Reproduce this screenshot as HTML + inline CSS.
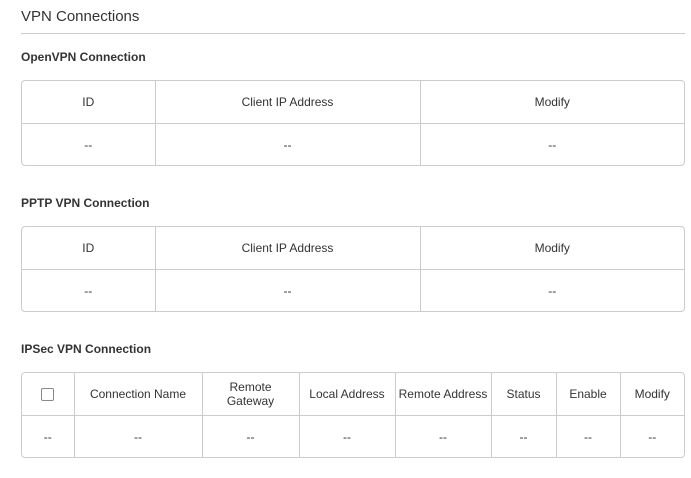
<!DOCTYPE html>
<html><head><style>
body{margin:0;background:#fff;font-family:"Liberation Sans",Arial,sans-serif;color:#333;width:691px;height:478px;overflow:hidden;position:relative}
.h{position:absolute;left:21px;top:8px;font-size:15px;color:#333}
.line{position:absolute;left:21px;top:33px;width:664px;height:1px;background:#ccc}
.st{position:absolute;left:21px;font-size:12px;font-weight:bold;color:#333}
.w{position:absolute;left:21px;width:662px;height:84px;border:1px solid #ccc;border-radius:4px;overflow:hidden}
table{border-collapse:collapse;width:100%;height:100%;table-layout:fixed}
td{border-right:1px solid #ccc;text-align:center;font-size:12px;color:#333;padding:0;line-height:14px}
td:last-child{border-right:none}
tr:first-child td{border-bottom:1px solid #ccc;height:42px}
.cb{display:inline-block;width:11px;height:11px;border:1px solid #888;border-radius:2px;vertical-align:middle}
</style></head><body>
<div class="h">VPN Connections</div>
<div class="line"></div>
<div class="st" style="top:50px">OpenVPN Connection</div>
<div class="w" style="top:80px"><table><colgroup><col style="width:133px"><col style="width:265px"><col></colgroup>
<tr><td>ID</td><td>Client IP Address</td><td>Modify</td></tr>
<tr><td>--</td><td>--</td><td>--</td></tr></table></div>
<div class="st" style="top:196px">PPTP VPN Connection</div>
<div class="w" style="top:226px"><table><colgroup><col style="width:133px"><col style="width:265px"><col></colgroup>
<tr><td>ID</td><td>Client IP Address</td><td>Modify</td></tr>
<tr><td>--</td><td>--</td><td>--</td></tr></table></div>
<div class="st" style="top:342px">IPSec VPN Connection</div>
<div class="w" style="top:372px"><table><colgroup><col style="width:52px"><col style="width:128px"><col style="width:97px"><col style="width:96px"><col style="width:96px"><col style="width:65px"><col style="width:64px"><col></colgroup>
<tr><td><span class="cb"></span></td><td>Connection Name</td><td>Remote<br>Gateway</td><td>Local Address</td><td>Remote Address</td><td>Status</td><td>Enable</td><td>Modify</td></tr>
<tr><td>--</td><td>--</td><td>--</td><td>--</td><td>--</td><td>--</td><td>--</td><td>--</td></tr></table></div>
</body></html>
